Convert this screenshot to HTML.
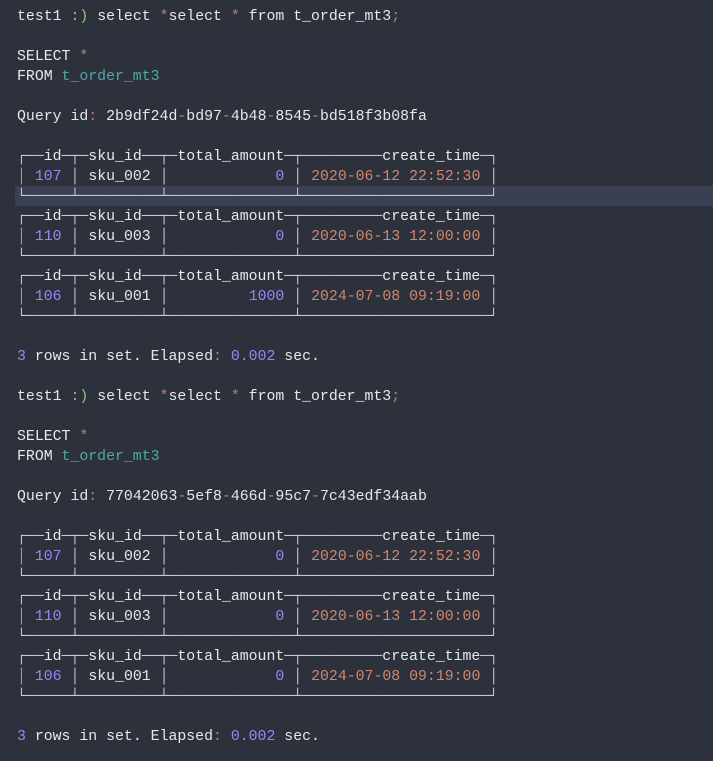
<!DOCTYPE html>
<html><head><meta charset="utf-8"><style>
html,body{margin:0;padding:0;background:#2c313c;width:713px;height:761px;overflow:hidden}
pre{margin:0;position:absolute;left:17px;top:7px;font-family:"Liberation Mono","DejaVu Sans Mono",monospace;font-size:14.85px;line-height:20px;color:#e6e8ec}
.hl{position:absolute;left:15px;top:186px;width:698px;height:20px;background:#3a3f51}
.g{color:#98c379}.o{color:#c97a62}.t{color:#4fa8a8}.n{color:#9a86f2}.d{color:#d08770}.b{color:#c5c9d2}.l{color:#7aa6da}
</style></head><body>
<div class="hl"></div>
<pre>test1 <span class="g">:)</span> select <span class="o">*</span>select <span class="o">*</span> from t_order_mt3<span class="o">;</span>

SELECT <span class="o">*</span>
FROM <span class="t">t_order_mt3</span>

Query id<span class="o">:</span> 2b9df24d<span class="o">-</span>bd97<span class="o">-</span>4b48<span class="o">-</span>8545<span class="o">-</span>bd518f3b08fa

<span class="b">┌──</span>id<span class="b">─┬─</span>sku_id<span class="b">──┬─</span>total_amount<span class="b">─┬─────────</span>create_time<span class="b">─┐</span>
<span class="l">│</span> <span class="n">107</span> <span class="b">│</span> sku_002 <span class="b">│</span>            <span class="n">0</span> <span class="b">│</span> <span class="d">2020-06-12 22:52:30</span> <span class="b">│</span>
<span class="b">└─────┴─────────┴──────────────┴─────────────────────┘</span>
<span class="b">┌──</span>id<span class="b">─┬─</span>sku_id<span class="b">──┬─</span>total_amount<span class="b">─┬─────────</span>create_time<span class="b">─┐</span>
<span class="l">│</span> <span class="n">110</span> <span class="b">│</span> sku_003 <span class="b">│</span>            <span class="n">0</span> <span class="b">│</span> <span class="d">2020-06-13 12:00:00</span> <span class="b">│</span>
<span class="b">└─────┴─────────┴──────────────┴─────────────────────┘</span>
<span class="b">┌──</span>id<span class="b">─┬─</span>sku_id<span class="b">──┬─</span>total_amount<span class="b">─┬─────────</span>create_time<span class="b">─┐</span>
<span class="l">│</span> <span class="n">106</span> <span class="b">│</span> sku_001 <span class="b">│</span>         <span class="n">1000</span> <span class="b">│</span> <span class="d">2024-07-08 09:19:00</span> <span class="b">│</span>
<span class="b">└─────┴─────────┴──────────────┴─────────────────────┘</span>

<span class="n">3</span> rows in set. Elapsed<span class="o">:</span> <span class="n">0.002</span> sec.

test1 <span class="g">:)</span> select <span class="o">*</span>select <span class="o">*</span> from t_order_mt3<span class="o">;</span>

SELECT <span class="o">*</span>
FROM <span class="t">t_order_mt3</span>

Query id<span class="o">:</span> 77042063<span class="o">-</span>5ef8<span class="o">-</span>466d<span class="o">-</span>95c7<span class="o">-</span>7c43edf34aab

<span class="b">┌──</span>id<span class="b">─┬─</span>sku_id<span class="b">──┬─</span>total_amount<span class="b">─┬─────────</span>create_time<span class="b">─┐</span>
<span class="l">│</span> <span class="n">107</span> <span class="b">│</span> sku_002 <span class="b">│</span>            <span class="n">0</span> <span class="b">│</span> <span class="d">2020-06-12 22:52:30</span> <span class="b">│</span>
<span class="b">└─────┴─────────┴──────────────┴─────────────────────┘</span>
<span class="b">┌──</span>id<span class="b">─┬─</span>sku_id<span class="b">──┬─</span>total_amount<span class="b">─┬─────────</span>create_time<span class="b">─┐</span>
<span class="l">│</span> <span class="n">110</span> <span class="b">│</span> sku_003 <span class="b">│</span>            <span class="n">0</span> <span class="b">│</span> <span class="d">2020-06-13 12:00:00</span> <span class="b">│</span>
<span class="b">└─────┴─────────┴──────────────┴─────────────────────┘</span>
<span class="b">┌──</span>id<span class="b">─┬─</span>sku_id<span class="b">──┬─</span>total_amount<span class="b">─┬─────────</span>create_time<span class="b">─┐</span>
<span class="l">│</span> <span class="n">106</span> <span class="b">│</span> sku_001 <span class="b">│</span>            <span class="n">0</span> <span class="b">│</span> <span class="d">2024-07-08 09:19:00</span> <span class="b">│</span>
<span class="b">└─────┴─────────┴──────────────┴─────────────────────┘</span>

<span class="n">3</span> rows in set. Elapsed<span class="o">:</span> <span class="n">0.002</span> sec.</pre>
</body></html>
